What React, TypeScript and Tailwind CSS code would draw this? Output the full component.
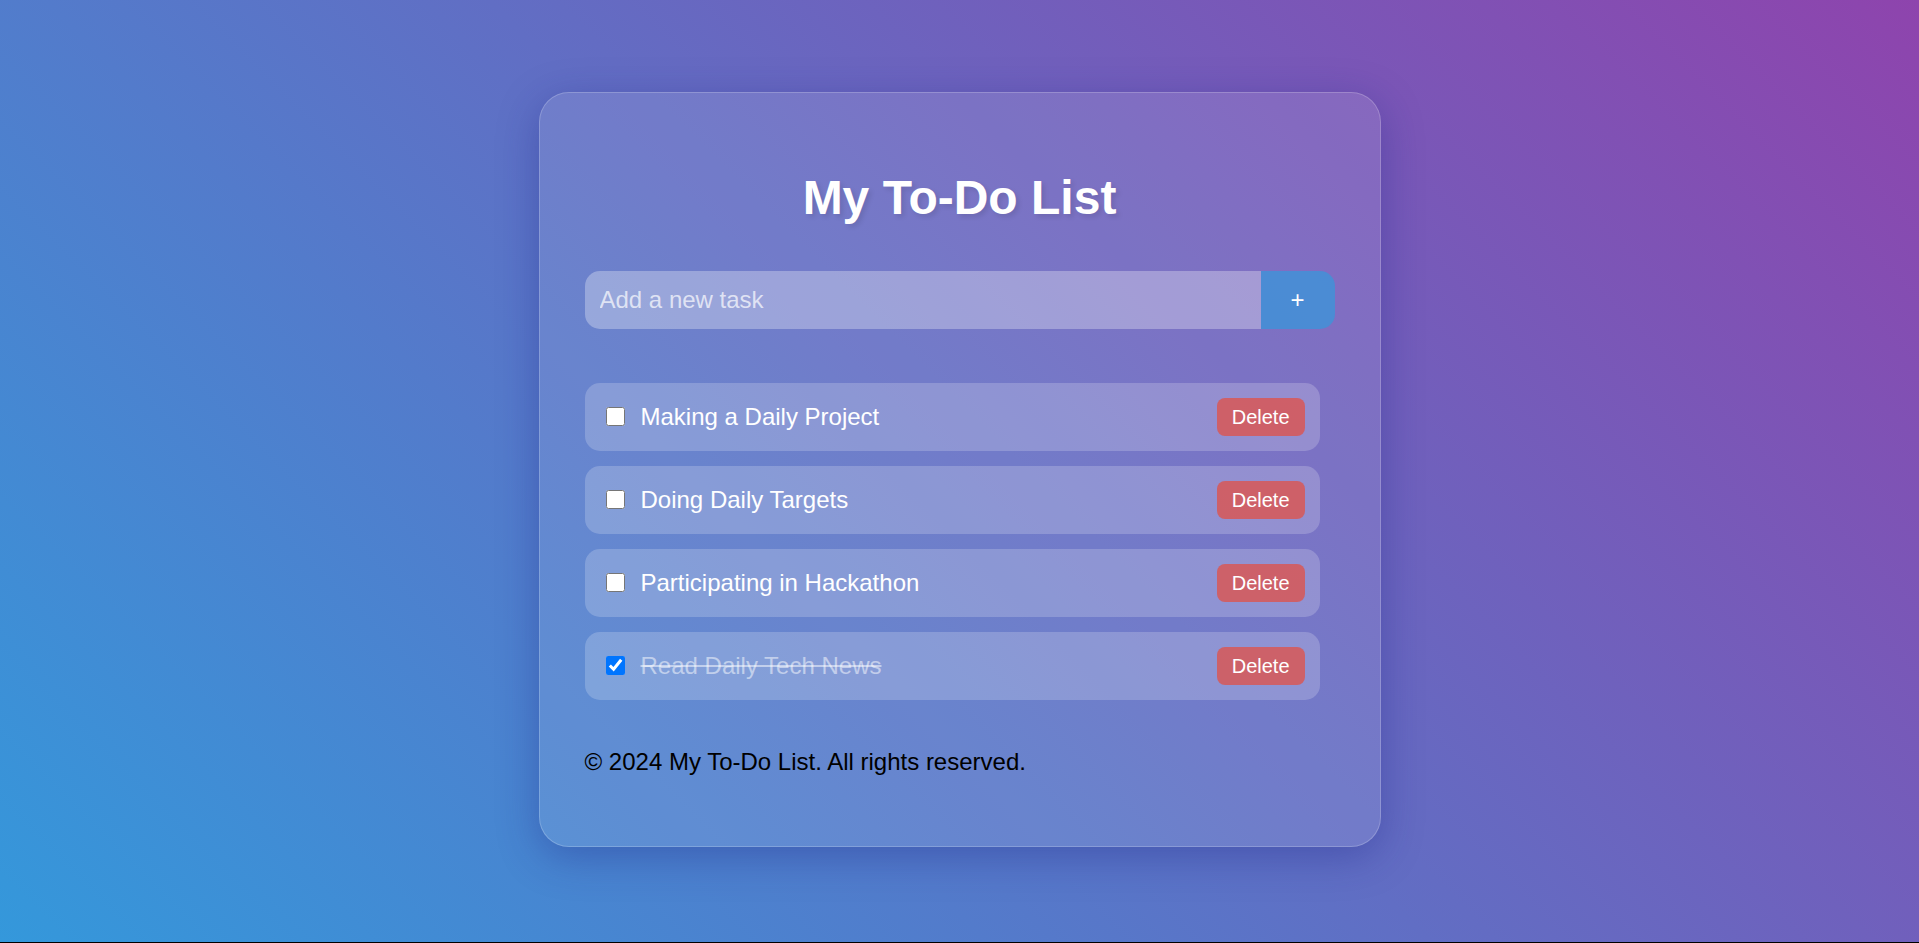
import { useState, type FormEvent } from "react";

type Task = { id: number; text: string; done: boolean };

const initialTasks: Task[] = [
  { id: 1, text: "Making a Daily Project", done: false },
  { id: 2, text: "Doing Daily Targets", done: false },
  { id: 3, text: "Participating in Hackathon", done: false },
  { id: 4, text: "Read Daily Tech News", done: true },
];

type TaskRowProps = { task: Task; onToggle: () => void; onDelete: () => void };

function TaskRow({ task, onToggle, onDelete }: TaskRowProps) {
  return (
    <li className="flex items-center justify-between gap-4 rounded-[15px] bg-white/20 p-[15px]">
      <label className="flex items-center gap-4 pl-1.5">
        <input type="checkbox" checked={task.done} onChange={onToggle} className="size-[19px] shrink-0" />
        <span className={task.done ? "text-white/50 line-through" : "text-white"}>{task.text}</span>
      </label>
      <button
        type="button"
        onClick={onDelete}
        className="h-[38px] rounded-lg bg-[#e74c3c]/70 px-[15px] text-xl text-white"
      >
        Delete
      </button>
    </li>
  );
}

export default function App() {
  const [tasks, setTasks] = useState<Task[]>(initialTasks);
  const [draft, setDraft] = useState("");

  const addTask = (event: FormEvent) => {
    event.preventDefault();
    const text = draft.trim();
    if (!text) return;
    setTasks([...tasks, { id: Date.now(), text, done: false }]);
    setDraft("");
  };

  const toggleTask = (id: number) =>
    setTasks(tasks.map((task) => (task.id === id ? { ...task, done: !task.done } : task)));

  return (
    <div className="flex min-h-screen flex-col items-center justify-center border-b border-black bg-[linear-gradient(45deg,#3498db,#8e44ad)] pb-1 font-['Liberation_Sans',Arial,sans-serif] text-[24px] leading-7">
      <main className="w-full max-w-[842px] rounded-[30px] border border-white/20 bg-white/10 px-[45px] pt-[73px] pb-[70px] shadow-[0_10px_40px_rgba(31,38,135,0.37)]">
        <h1 className="mb-[41px] text-center text-[48px] leading-[64px] font-bold text-white [text-shadow:3px_3px_5px_rgba(0,0,0,0.1)]">
          My To-Do List
        </h1>
        <form onSubmit={addTask} className="flex h-[58px]">
          <input
            type="text"
            aria-label="New task"
            placeholder="Add a new task"
            value={draft}
            onChange={(event) => setDraft(event.target.value)}
            className="min-w-0 flex-1 rounded-l-[15px] bg-white/30 px-[15px] text-white outline-none placeholder:text-white/70"
          />
          <button
            type="submit"
            aria-label="Add task"
            className="w-[74px] rounded-r-[15px] bg-[#3498db]/70 text-white"
          >
            +
          </button>
        </form>
        <ul className="mt-[54px] mr-[15px] flex flex-col gap-[15px]">
          {tasks.map((task) => (
            <TaskRow
              key={task.id}
              task={task}
              onToggle={() => toggleTask(task.id)}
              onDelete={() => setTasks(tasks.filter((other) => other.id !== task.id))}
            />
          ))}
        </ul>
        <footer className="mt-12 text-black">© 2024 My To-Do List. All rights reserved.</footer>
      </main>
    </div>
  );
}
